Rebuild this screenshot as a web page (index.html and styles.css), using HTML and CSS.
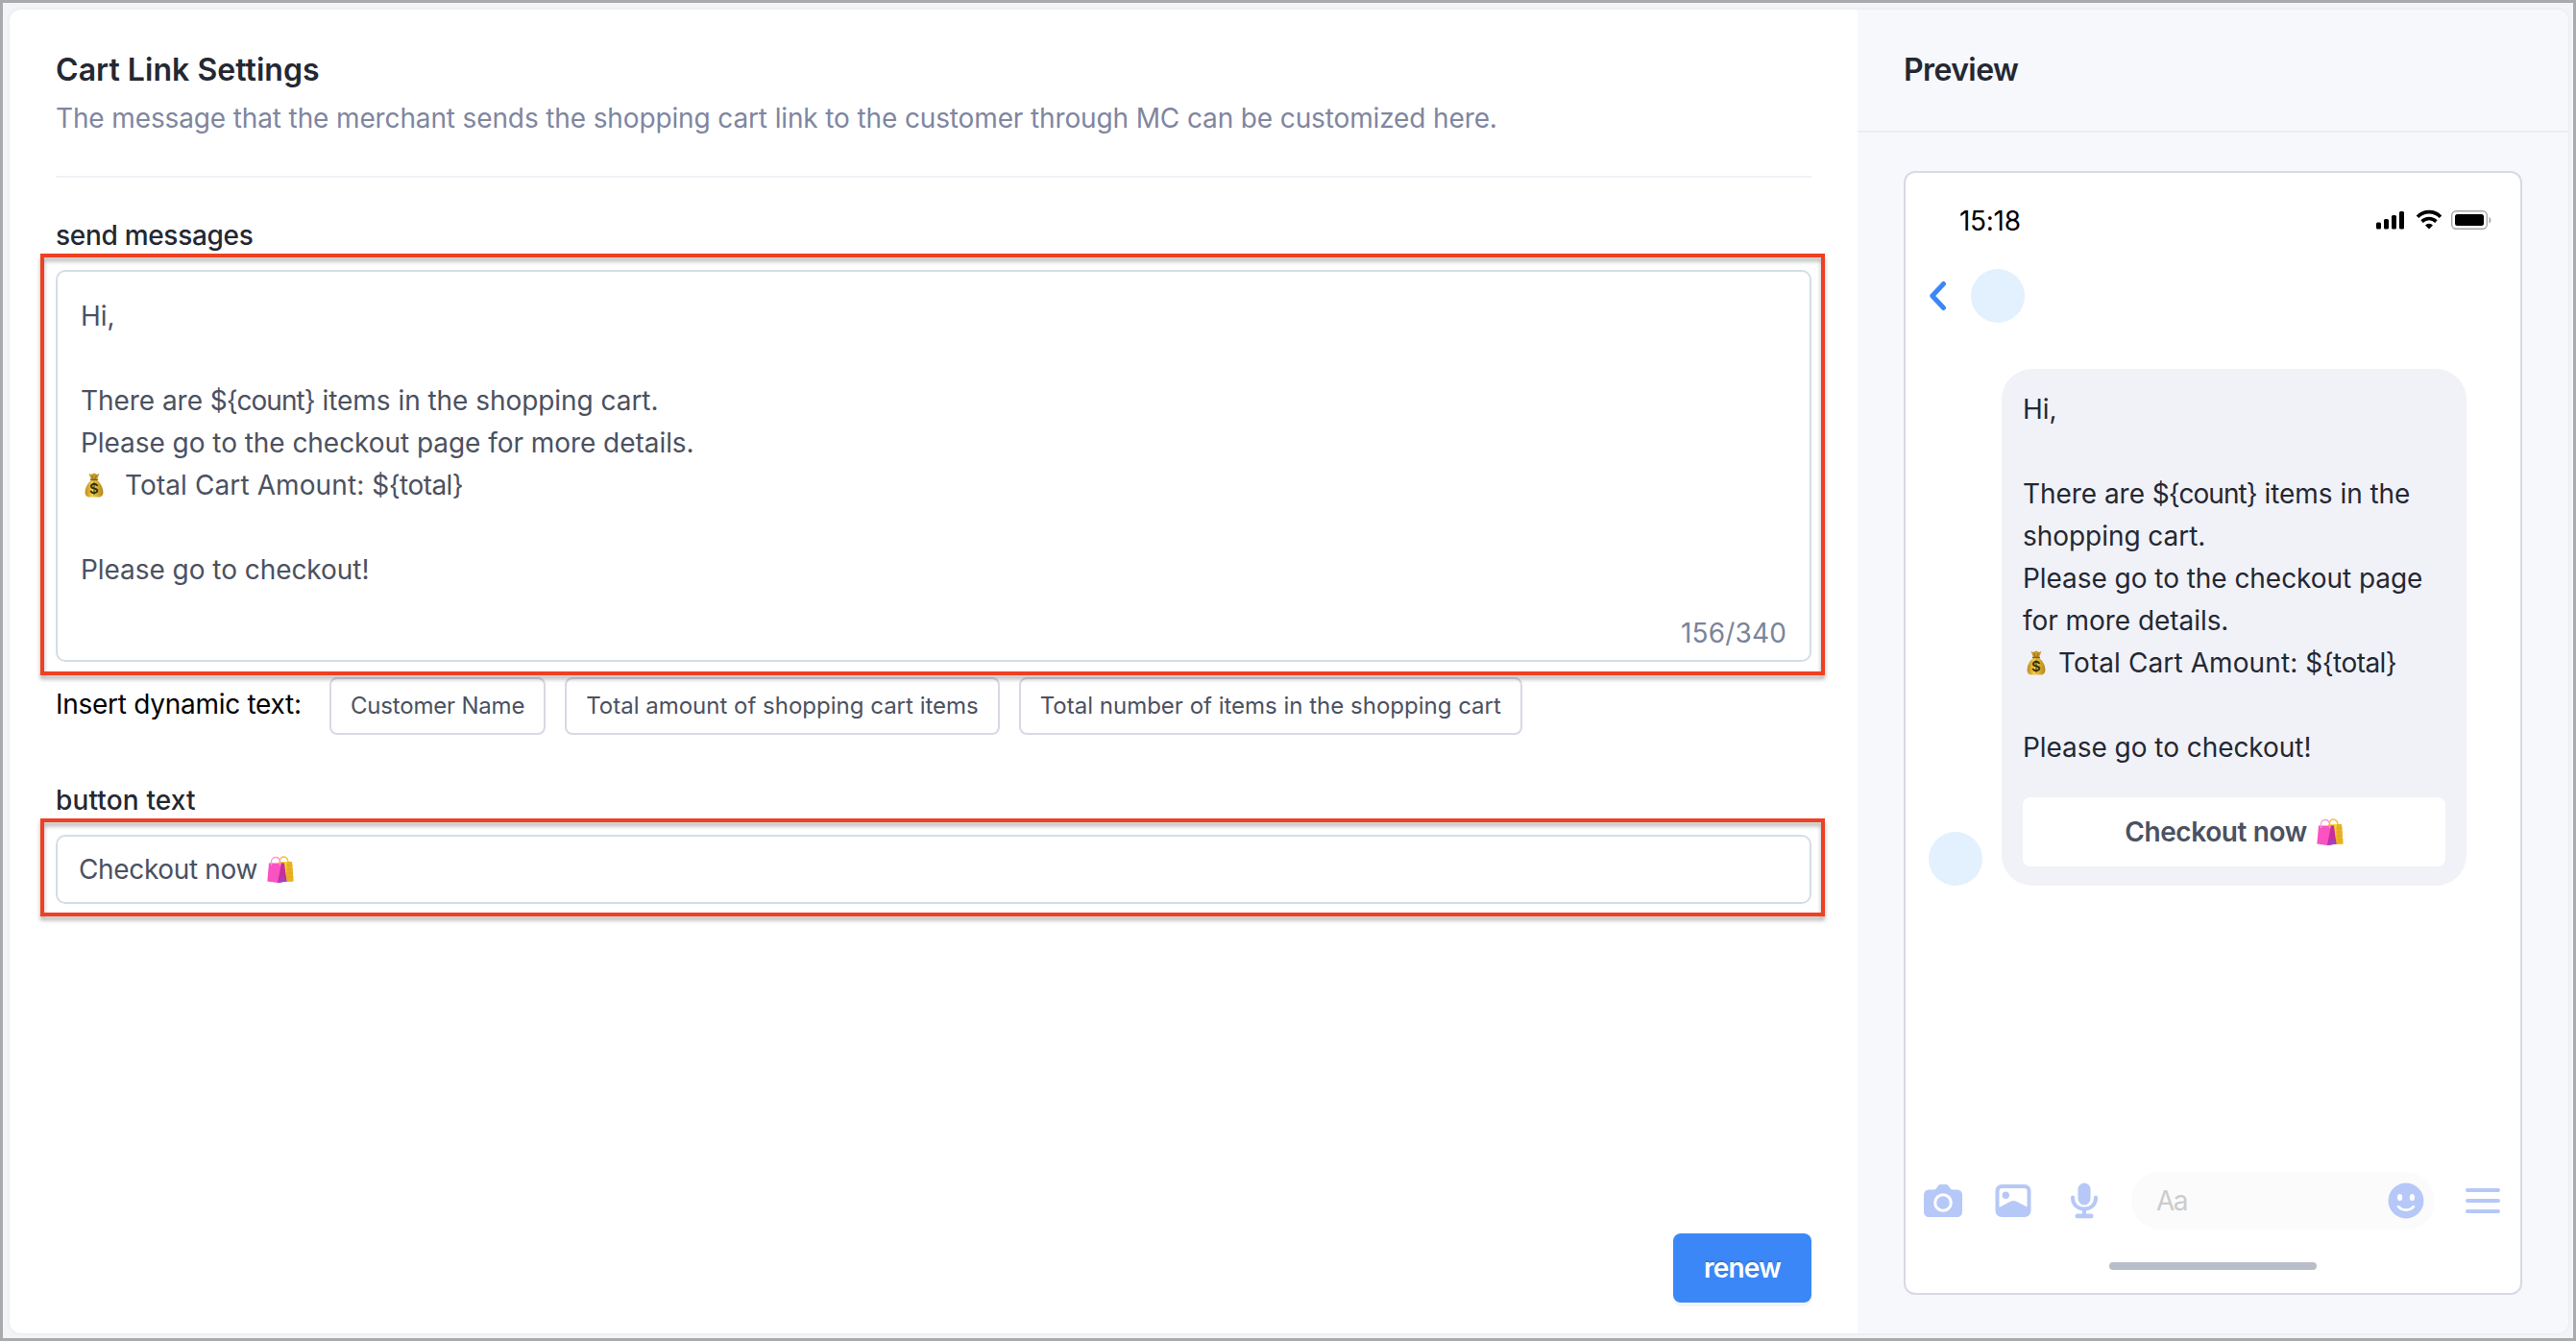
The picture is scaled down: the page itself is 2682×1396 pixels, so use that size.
FILE: index.html
```html
<!DOCTYPE html>
<html lang="en">
<head>
    <meta charset="UTF-8">
    <meta name="viewport" content="width=device-width, initial-scale=1.0">
    <title>Cart Link Settings</title>
    <link rel="stylesheet" href="styles.css">
</head>
<body>

    <svg class="sprite" width="0" height="0">
        <defs>
            <linearGradient id="gold" x1="0" x2="1" y1="0" y2="0">
                <stop offset="0" stop-color="#b98a1c"/>
                <stop offset="0.4" stop-color="#f6cf4c"/>
                <stop offset="1" stop-color="#b5851b"/>
            </linearGradient>
            <!-- money bag -->
            <symbol id="money" viewBox="0 0 20 26">
                <path d="M4.5 0.8 7 2 10 0.6 13 2 15.5 0.8 13 7.5H7z" fill="#c99a2c"/>
                <path d="M7.8 2.5 9 7M12.4 2.5 11 7" stroke="#8a6415" stroke-width="0.8" fill="none"/>
                <path d="M7 8C3 11 .6 16 .6 20.500c0 3.500 1.900 5 5 5h8.800c3.100 0 5-1.500 5-5C19.400 16 17 11 13 8z" fill="url(#gold)"/>
                <path d="M6.600 7.500h6.800" stroke="#8c5f14" stroke-width="1.600" stroke-linecap="round"/>
                <text x="10" y="22" text-anchor="middle" class="money-sign">$</text>
            </symbol>
            <!-- shopping bags -->
            <symbol id="bags" viewBox="0 0 28 28">
                <path d="M13.500 8V5c0-5.500 7.500-5.500 8.500 1v1" fill="none" stroke="#f3bd3a" stroke-width="1.300"/>
                <path d="M12 6h14l1.500 20.500L14 27z" fill="#f9d42f"/>
                <path d="M21 6h5l1.500 20.500L20 27z" fill="#e6b51f"/>
                <path d="M20 10h6.400M20 14h6.700M20 18h7M20 22h7.200" stroke="#f29d35" stroke-width="1"/>
                <path d="M2 7.500h15L20.500 26.500 11 28 .3 26.500z" fill="#fb52c3"/>
                <path d="M15 7.500h3L20.500 26.500 11 28z" fill="#c72f9a"/>
                <path d="M16 21 20.500 26.500 11 28z" fill="#9a45c8"/>
                <path d="M4.500 10V6c0-6 8.500-6 9 0v4" fill="none" stroke="#f79ad5" stroke-width="1.300"/>
            </symbol>
        </defs>
    </svg>

    <div class="card">
        <div class="settings">
            <div class="settings-header">
                <h2>Cart Link Settings</h2>
                <p>The message that the merchant sends the shopping cart link to the customer through MC can be customized here.</p>
            </div>

            <div class="label">send messages</div>
            <div class="field message-field">
                <div class="message">
                    <p>Hi,</p>
                    <p><br></p>
                    <p>There are <span class="var">${count}</span> items in the shopping cart.</p>
                    <p>Please go to the checkout page for more details.</p>
                    <p class="total"><svg class="emoji money"><use href="#money"/></svg><span class="gap"></span>Total Cart Amount: <span class="var">${total}</span></p>
                    <p><br></p>
                    <p>Please go to checkout!</p>
                </div>
                <div class="counter">156/340</div>
                <div class="highlight"></div>
            </div>

            <div class="insert-row">
                <span class="insert-label">Insert dynamic text:</span>
                <button class="chip chip-name">Customer Name</button>
                <button class="chip">Total amount of shopping cart items</button>
                <button class="chip">Total number of items in the shopping cart</button>
            </div>

            <div class="label label-button">button text</div>
            <div class="field button-field">
                <span>Checkout now</span>
                <svg class="emoji bags"><use href="#bags"/></svg>
                <div class="highlight"></div>
            </div>

            <button class="renew">renew</button>
        </div>

        <div class="preview">
            <div class="preview-header">Preview</div>
            <div class="phone">
                <div class="status-bar">
                    <span class="time">15:18</span>
                    <svg width="122" height="22" viewBox="0 0 122 22">
                        <rect x="1" y="13.500" width="5" height="7" rx="1.500"/>
                        <rect x="9" y="10" width="5" height="10.500" rx="1.500"/>
                        <rect x="17" y="6" width="5" height="14.500" rx="1.500"/>
                        <rect x="25" y="2" width="5" height="18.500" rx="1.500"/>
                        <g fill="none" stroke="#000" stroke-width="3.600">
                            <path d="M44 7.800a16.500 16.500 0 0 1 24 0"/>
                            <path d="M48.600 12.600a10.500 10.500 0 0 1 14.800 0"/>
                        </g>
                        <path d="M56 20.600 52 16.400a5.800 5.800 0 0 1 8 0z"/>
                        <rect x="79.700" y="1.700" width="36.600" height="18.600" rx="4.500" fill="none" stroke="#a6a6a6" stroke-width="1.400"/>
                        <rect x="83" y="5" width="30" height="12" rx="2.500"/>
                        <path d="M118.500 8v6.500c2.600-1.200 2.600-5.300 0-6.500z" fill="#a6a6a6"/>
                    </svg>
                </div>

                <div class="chat-header">
                    <svg width="20" height="32" viewBox="0 0 20 32" fill="none" stroke="#3a87f8" stroke-width="5" stroke-linecap="round" stroke-linejoin="round">
                        <path d="M15.500 3.500 3.800 16l11.700 12.500"/>
                    </svg>
                    <div class="avatar"></div>
                </div>

                <div class="chat">
                    <div class="avatar"></div>
                    <div class="bubble">
                        <div class="bubble-text">
                            <p>Hi,</p>
                            <p><br></p>
                            <p>There are <span class="var">${count}</span> items in the<br>shopping cart.</p>
                            <p>Please go to the checkout page for more details.</p>
                            <p class="total"><svg class="emoji money"><use href="#money"/></svg><span class="gap"></span>Total Cart Amount: <span class="var">${total}</span></p>
                            <p><br></p>
                            <p>Please go to checkout!</p>
                        </div>
                        <div class="checkout">
                            <span>Checkout now</span>
                            <svg class="emoji bags"><use href="#bags"/></svg>
                        </div>
                    </div>
                </div>

                <div class="toolbar">
                    <!-- camera -->
                    <svg class="camera" width="42" height="36" viewBox="0 0 42 36">
                        <path d="M7 6.500h4.500c1.300 0 2-.5 2.800-1.700l1.200-1.800C16.400 1.600 17.300 1 19 1h4.500c1.700 0 2.600.6 3.500 2l1.200 1.800c.8 1.200 1.500 1.700 2.800 1.700H35c4 0 6 2 6 6V29c0 4-2 6-6 6H7c-4 0-6-2-6-6V12.500c0-4 2-6 6-6z" fill="#b6c8f8"/>
                        <circle cx="21" cy="20" r="8.300" fill="#b6c8f8" stroke="#fff" stroke-width="3"/>
                    </svg>
                    <!-- picture -->
                    <svg class="picture" width="38" height="36" viewBox="0 0 38 36">
                        <rect x="0.500" y="1" width="37" height="34" rx="6.500" fill="#b6c8f8"/>
                        <path d="M4.500 8a3 3 0 0 1 3-3h23a3 3 0 0 1 3 3v16.500c-4-2-7.500-4-11-5.800-2.200-1.100-4.300-1.100-6.500 0-3.500 1.800-7 4.300-11.500 6z" fill="#fff"/>
                        <circle cx="11.300" cy="12.300" r="3.700" fill="#b6c8f8"/>
                    </svg>
                    <!-- microphone -->
                    <svg class="mic" width="30" height="38" viewBox="0 0 30 38">
                        <rect x="8.500" y="0.500" width="13" height="23" rx="6.500" fill="#b6c8f8"/>
                        <path d="M3 15.500V16c0 7 5 11.500 12 11.500S27 23 27 16v-.500" fill="none" stroke="#b6c8f8" stroke-width="4" stroke-linecap="round"/>
                        <path d="M13 27h4v6h-4z" fill="#b6c8f8"/>
                        <rect x="5.700" y="32.500" width="18.600" height="4.800" rx="1.800" fill="#b6c8f8"/>
                    </svg>
                    <div class="input-pill">
                        <span>Aa</span>
                        <svg width="38" height="38" viewBox="0 0 38 38">
                            <circle cx="19" cy="19" r="18.500" fill="#b6c8f8"/>
                            <ellipse cx="12.600" cy="15.500" rx="2.600" ry="3.600" fill="#fff"/>
                            <ellipse cx="25.400" cy="15.500" rx="2.600" ry="3.600" fill="#fff"/>
                            <path d="M11 25.200c4.500 4.600 11.500 4.600 16 0" fill="none" stroke="#fff" stroke-width="2.600" stroke-linecap="round"/>
                        </svg>
                    </div>
                    <div class="menu">
                        <i></i>
                        <i></i>
                        <i></i>
                    </div>
                </div>
                <div class="home-bar"></div>
            </div>
        </div>
    </div>

</body>
</html>
```
FILE: styles.css
```css
* {
    box-sizing: border-box;
}

body {
    font-family: Inter, "Noto Sans", sans-serif;
    font-size: 28px;
    line-height: 44px;
    letter-spacing: -0.13px;
    margin: 0;
    height: 1396px;
    padding: 7px 5px 5px 7px;
    border: 3px solid #a9aaac;
    background-color: #f3f4f8;
}

p {
    margin: 0;
}

.sprite {
    position: absolute;
}

.card {
    display: flex;
    height: 1378px;
    border-radius: 12px;
    background-color: #ffffff;
    box-shadow: 0 0 4px rgba(0, 0, 0, 0.06);
    overflow: hidden;
}

/* Left side */
.settings {
    display: flex;
    flex-direction: column;
    width: 1924px;
    padding: 41px 48px 32px;
}

.settings-header {
    padding-bottom: 38px;
    margin-bottom: 38px;
    border-bottom: 2px solid #f0f1f7;
}

.settings-header h2 {
    margin: 0 0 6px;
    font-size: 32px;
    font-weight: 600;
    letter-spacing: 0.05px;
    color: #242833;
}

.settings-header p {
    color: #7f869f;
}

.label {
    font-weight: 500;
    letter-spacing: -0.3px;
    color: #242833;
}

.label-button {
    margin-top: 46px;
    letter-spacing: 0.15px;
}

.field {
    position: relative;
    width: 1828px;
    margin-top: 14px;
    border: 2px solid #d4dde6;
    border-radius: 10px;
    color: #4b5161;
}

.message-field {
    height: 408px;
    padding: 24px 24px 6px;
    display: flex;
    flex-direction: column;
    justify-content: space-between;
}

.message,
.bubble-text {
    letter-spacing: -0.05px;
}

.message p,
.bubble-text p {
    min-height: 44px;
}

.var {
    letter-spacing: -0.95px;
}

.total {
    height: 44px;
    letter-spacing: 0.1px;
}

.total .var {
    letter-spacing: -0.55px;
}

.counter {
    text-align: right;
    letter-spacing: 0.15px;
    color: #7a8499;
}

/* Red frame around the editable field */
.highlight {
    position: absolute;
    top: -19px;
    right: -16px;
    bottom: -16px;
    left: -18px;
    border: 4px solid #ee4023;
    filter: drop-shadow(0 4px 2px rgba(0, 0, 0, 0.3));
    pointer-events: none;
}

.button-field .highlight {
    bottom: -15px;
}

.emoji {
    display: inline-block;
    overflow: visible;
}

.money {
    width: 20px;
    height: 26px;
    margin-left: 4px;
    vertical-align: -3px;
}

.money-sign {
    font-size: 15px;
    font-weight: 600;
    fill: #3b3009;
}

.bags {
    width: 28px;
    height: 28px;
    margin-left: 10px;
}

.gap {
    display: inline-block;
    width: 22px;
}

.insert-row {
    display: flex;
    align-items: center;
    height: 60px;
    margin-top: 16px;
}

.insert-label {
    width: 273px;
    margin-bottom: 4px;
    letter-spacing: -0.28px;
    color: #000000;
}

.chip {
    height: 60px;
    margin: 0 20px 0 0;
    padding: 0 20px 1px;
    border: 2px solid #d8d9e5;
    border-radius: 8px;
    background-color: #ffffff;
    font-family: inherit;
    font-size: 24px;
    letter-spacing: 0;
    color: #4b5161;
}

.insert-label + .chip {
    margin-left: 12px;
}

.chip-name {
    letter-spacing: -0.2px;
}

.button-field {
    display: flex;
    align-items: center;
    height: 72px;
    padding: 0 22px;
    letter-spacing: -0.35px;
}

.renew {
    width: 144px;
    height: 72px;
    margin-top: auto;
    align-self: flex-end;
    border: none;
    border-radius: 8px;
    background-color: #3b87f7;
    box-shadow: 0 4px 0 rgba(0, 0, 0, 0.045);
    color: #ffffff;
    font-family: inherit;
    font-size: 28px;
    font-weight: 600;
    letter-spacing: -0.8px;
    text-shadow: 0 -2px 0 rgba(0, 0, 0, 0.12);
}

/* Right side */
.preview {
    flex: 1;
    background-color: #f6f8fc;
}

.preview-header {
    height: 128px;
    padding: 41px 48px;
    border-bottom: 2px solid #ebedf2;
    font-size: 32px;
    font-weight: 600;
    letter-spacing: -0.6px;
    color: #242833;
}

.phone {
    width: 644px;
    height: 1170px;
    margin: 40px 48px;
    border: 2px solid #d8d9e5;
    border-radius: 12px;
    background-color: #ffffff;
}

.status-bar {
    display: flex;
    align-items: center;
    justify-content: space-between;
    height: 100px;
    padding: 0 29px 0 56px;
    color: #000000;
}

.status-bar svg {
    margin-bottom: 2px;
}

.time {
    letter-spacing: -0.3px;
}

.chat-header {
    display: flex;
    align-items: center;
    gap: 24px;
    height: 56px;
    padding-left: 24px;
}

.avatar {
    width: 56px;
    height: 56px;
    border-radius: 50%;
    background-color: #e3f0fd;
}

.chat {
    display: flex;
    align-items: flex-end;
    gap: 20px;
    padding: 48px 56px 0 24px;
}

.bubble {
    width: 484px;
    height: 538px;
    padding: 20px 22px;
    border-radius: 32px;
    background-color: #f1f2f8;
    color: #242833;
}

.bubble-text .gap {
    width: 13px;
}

.checkout {
    display: flex;
    align-items: center;
    justify-content: center;
    height: 72px;
    margin-top: 30px;
    border-radius: 8px;
    background-color: #ffffff;
    font-weight: 600;
    letter-spacing: -0.4px;
    color: #4b5161;
}

.toolbar {
    display: flex;
    align-items: center;
    height: 60px;
    margin-top: 298px;
    padding-left: 18px;
}

.picture {
    margin-left: 33px;
}

.mic {
    margin-left: 40px;
}

.input-pill {
    display: flex;
    align-items: center;
    justify-content: space-between;
    width: 316px;
    height: 60px;
    margin-left: 34px;
    padding: 0 11px 0 26px;
    border-radius: 30px;
    background-color: #fbfbfb;
    letter-spacing: -1.5px;
    color: #cccccc;
}

.menu {
    display: flex;
    flex-direction: column;
    gap: 7px;
    margin-left: 32px;
}

.menu i {
    width: 36px;
    height: 4px;
    border-radius: 2px;
    background-color: #b6c8f8;
}

.home-bar {
    width: 216px;
    height: 8px;
    margin: 34px auto 0;
    border-radius: 4px;
    background-color: #b8bec9;
}
```
